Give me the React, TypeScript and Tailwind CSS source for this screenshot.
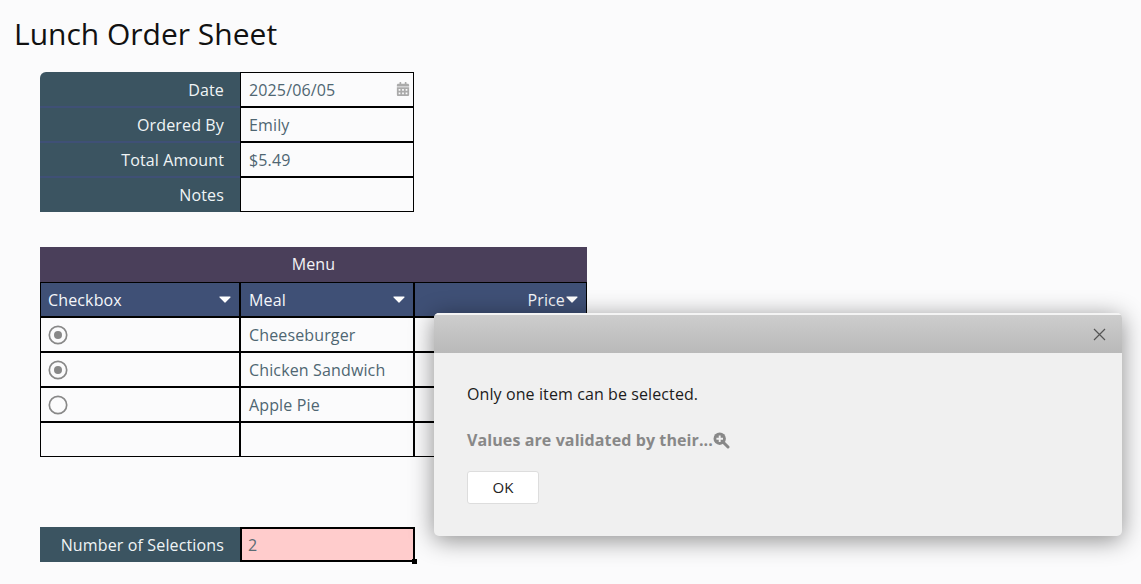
import { FC, ReactNode } from "react";
import { FaCalendarAlt } from "react-icons/fa";

const Caret: FC = () => (
  <svg width="12" height="7" viewBox="0 0 12 7" className="shrink-0">
    <path d="M1 1 H11 L6 6 Z" fill="#fff" stroke="#fff" strokeWidth="1.2" strokeLinejoin="round" />
  </svg>
);

const Radio: FC<{ checked?: boolean }> = ({ checked }) => (
  <svg width="20" height="20" viewBox="0 0 20 20">
    <circle cx="10" cy="10" r="8.7" fill="none" stroke="#888" strokeWidth="1.7" />
    {checked && <circle cx="10" cy="10" r="4" fill="#888" />}
  </svg>
);

const ZoomIcon: FC = () => (
  <svg width="17" height="17" viewBox="0 0 17 17" className="shrink-0">
    <path d="M10.5 10.5 L15 15" stroke="#888" strokeWidth="3" strokeLinecap="round" />
    <circle cx="6.7" cy="6.7" r="6.2" fill="#888" />
    <path d="M6.7 3.4 V10 M3.4 6.7 H10" stroke="#f0f0f0" strokeWidth="1.9" />
  </svg>
);

const Cell: FC<{ className?: string; children?: ReactNode }> = ({ className, children }) => (
  <div
    className={`h-[35px] border border-black px-2 flex items-center text-[#4f6672] whitespace-nowrap ${className ?? ""}`}
  >
    {children}
  </div>
);

const HeaderCell: FC<{ title: string; className?: string; right?: boolean }> = ({ title, className, right }) => (
  <div
    className={`h-[35px] border border-black bg-[#3f5076] text-[#f4f6fa] flex items-center pr-[8px] ${
      right ? "justify-end gap-[1px]" : "justify-between"
    } ${className ?? ""}`}
  >
    <span>{title}</span>
    <Caret />
  </div>
);

const formRows = [
  { label: "Date", value: "2025/06/05" },
  { label: "Ordered By", value: "Emily" },
  { label: "Total Amount", value: "$5.49" },
  { label: "Notes", value: "" },
];

const menuRows = [
  { meal: "Cheeseburger", checked: true, radio: true },
  { meal: "Chicken Sandwich", checked: true, radio: true },
  { meal: "Apple Pie", checked: false, radio: true },
  { meal: "", checked: false, radio: false },
];

export default function App() {
  return (
    <div className="relative h-[584px] w-[1141px] overflow-hidden bg-[#fbfbfc] font-['Open_Sans',sans-serif] text-base tracking-[0.14px]">
      <h1 className="pl-[14px] pt-[12px] h-[72px] text-[30px] leading-[44px] text-[#111] tracking-normal">
        Lunch Order Sheet
      </h1>

      {/* Order form */}
      <div className="ml-[40px] w-[374px]">
        {formRows.map((row, i) => (
          <div key={row.label} className="flex">
            <div
              className={`h-[35px] w-[200px] bg-[#3b5461] text-[#f0f4f6] flex items-center justify-end pr-4 border-[#3f5076] ${
                i === 0 ? "rounded-tl-[6px] pt-[1px]" : "border-t"
              } ${i < 3 ? "border-b" : ""}`}
            >
              {row.label}
            </div>
            <Cell className={`w-[174px] justify-between pr-[3px] ${i === 0 ? "pt-[1px]" : ""}`}>
              <span>{row.value}</span>
              {i === 0 && <FaCalendarAlt className="text-[#aaaaaa] text-[14px] -mt-[2px]" />}
            </Cell>
          </div>
        ))}
      </div>

      {/* Menu table */}
      <div className="ml-[40px] mt-[35px] w-[547px]">
        <div className="h-[35px] pb-[2px] bg-[#4a3f5a] text-[#f4f2f6] flex items-center justify-center">Menu</div>
        <div className="flex">
          <HeaderCell title="Checkbox" className="w-[200px] pl-[7px]" />
          <HeaderCell title="Meal" className="w-[174px] pl-[8px]" />
          <HeaderCell title="Price" className="w-[173px] pl-[8px]" right />
        </div>
        {menuRows.map((row, i) => (
          <div key={i} className="flex">
            <Cell className="w-[200px] pl-[7px]">{row.radio && <Radio checked={row.checked} />}</Cell>
            <Cell className="w-[174px]">{row.meal}</Cell>
            <Cell className="w-[173px]" />
          </div>
        ))}
      </div>

      {/* Selection counter */}
      <div className="ml-[40px] mt-[70px] flex">
        <div className="h-[35px] w-[200px] bg-[#3b5461] text-[#f0f4f6] flex items-center justify-end pr-4">
          Number of Selections
        </div>
        <div className="relative h-[35px] w-[175px] border-2 border-black bg-[#ffcccc] text-[#5b6b74] flex items-center pl-[6px]">
          2
          <span className="absolute -right-[4px] -bottom-[4px] h-[5px] w-[5px] bg-black" />
        </div>
      </div>

      {/* Validation dialog */}
      <div className="absolute left-[434px] top-[313px] w-[688px] h-[223px] rounded-[5px] bg-[#f0f0f0] shadow-[0_4px_24px_rgba(0,0,0,0.45)] overflow-hidden tracking-[0.1px]">
        <div className="h-[40px] border-t-2 border-t-[#f4f4f4] bg-gradient-to-b from-[#cdcdcd] to-[#b9b9b9] flex items-center justify-end pr-[16px]">
          <svg width="13" height="13" viewBox="0 0 13 13">
            <path d="M1 1 L12 12 M12 1 L1 12" stroke="#555" strokeWidth="1.2" fill="none" />
          </svg>
        </div>
        <div className="pl-[33px] pt-[30px]">
          <p className="leading-[22px] text-[#1c1c1c]">Only one item can be selected.</p>
          <p className="mt-[24px] leading-[22px] font-bold text-[#888] flex items-center">
            Values are validated by their...
            <ZoomIcon />
          </p>
          <button className="mt-[20px] h-[33px] w-[72px] rounded-[3px] border border-[#dddddd] bg-white text-[#222] text-[15px]">
            OK
          </button>
        </div>
      </div>
    </div>
  );
}
